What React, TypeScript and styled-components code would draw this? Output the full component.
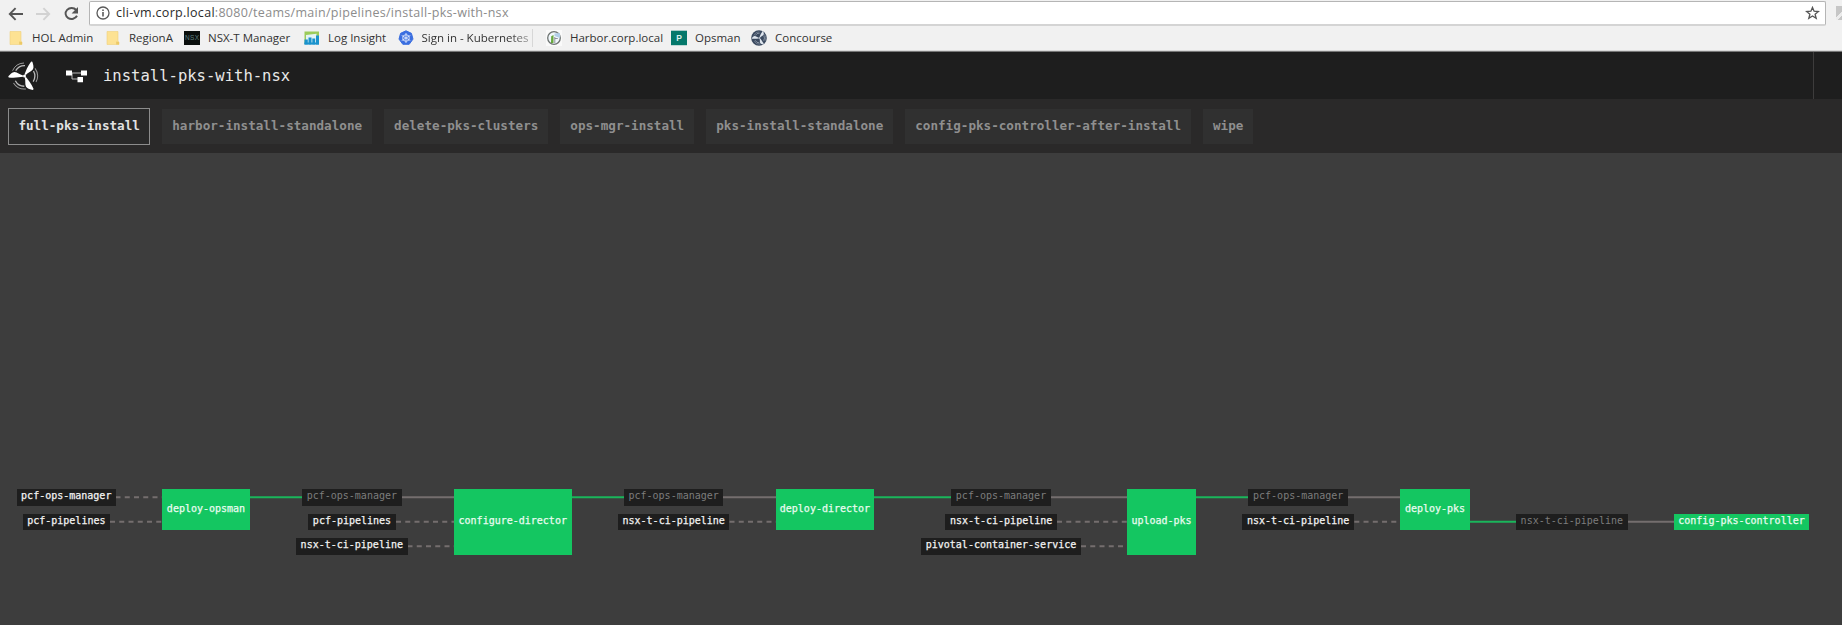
import React from "react";
import styled, { createGlobalStyle, css } from "styled-components";

const GlobalStyle = createGlobalStyle`
  html, body, #root { height: 100%; margin: 0; }
  body { overflow: hidden; background: #3d3d3d; }
  * { box-sizing: border-box; }
`;

const uiFont = `"Open Sans", "Noto Sans", sans-serif`;
const monoFont = `"DejaVu Sans Mono", "Liberation Mono", monospace`;

const Page = styled.div`
  display: flex;
  flex-direction: column;
  height: 625px;
  width: 1842px;
  overflow: hidden;
`;

/* ---------- browser chrome ---------- */

const Chrome = styled.div`
  height: 52px;
  flex: none;
  background: #f1f1f1;
  border-bottom: 1px solid #777;
  box-shadow: inset 0 -1px 0 #d8d8d8;
  font-family: ${uiFont};
`;

const Toolbar = styled.div`
  display: flex;
  height: 26px;
  padding: 1px 0 0 7px;
`;

const NavButtons = styled.div`
  display: flex;
  align-items: center;
  flex: none;
  width: 82px;
  height: 25px;

  svg + svg { margin-left: 11px; }
`;

const AddressBar = styled.div`
  display: flex;
  align-items: center;
  flex: none;
  width: 1737px;
  height: 25px;
  padding: 0 5px 0 6px;
  background: #fff;
  border: 1px solid #b5b5b5;
  border-bottom: 2px solid #d4d4d4;
  border-radius: 2px;
`;

const Url = styled.div`
  flex: 1;
  margin-left: 6px;
  font-size: 12.5px;
  line-height: 20px;
  letter-spacing: 0.3px;
  white-space: nowrap;
  color: #8c8c8c;
`;

const Host = styled.span`
  color: #2b2b2b;
`;

const Extension = styled.div`
  width: 12px;
  height: 14px;
  margin: 5px 0 0 10px;
  flex: none;
  background: linear-gradient(135deg, #c6c6c6 45%, #ececec 45%, #ececec 60%, #c6c6c6 60%);
`;

const Bookmarks = styled.div`
  display: flex;
  align-items: center;
  height: 24px;
  padding-left: 8px;
`;

const Bookmark = styled.div<{ $width: number }>`
  display: flex;
  align-items: center;
  flex: none;
  gap: 8px;
  width: ${(p) => p.$width}px;
  svg { flex: none; }
`;

const BookmarkLabel = styled.span<{ $fade?: boolean }>`
  font-size: 11.5px;
  line-height: 18px;
  color: #333;
  white-space: nowrap;
  ${(p) =>
    p.$fade &&
    css`
      padding-right: 4px;
      border-right: 1px solid #999;
      mask-image: linear-gradient(to right, #000 88px, rgba(0, 0, 0, 0.25) 112px);
    `}
`;

/* ---------- application header ---------- */

const Header = styled.div`
  display: flex;
  align-items: center;
  flex: none;
  height: 47px;
  padding-left: 8px;
  background: #1e1e1e;
`;

const PipelineIcon = styled.svg`
  margin-left: 27px;
`;

const Title = styled.div`
  flex: 1;
  margin-left: 16px;
  font: 15.55px/20px ${monoFont};
  color: #e8e8e8;
`;

const UserPanel = styled.div`
  width: 29px;
  height: 47px;
  border-left: 1px solid #3d3c3c;
`;

const Tabs = styled.div`
  display: flex;
  align-items: center;
  flex: none;
  gap: 12px;
  height: 54px;
  padding-left: 8px;
  background: #2a2929;
`;

const Tab = styled.div<{ $active?: boolean }>`
  height: ${(p) => (p.$active ? 37 : 35)}px;
  padding: 0 ${(p) => (p.$active ? 9.4 : 10)}px;
  border: ${(p) => (p.$active ? "1px solid #8c8c8c" : "0")};
  background: ${(p) => (p.$active ? "#292929" : "#303030")};
  color: ${(p) => (p.$active ? "#e2e2e2" : "#8f8f8f")};
  font: bold 12.6px/34px ${monoFont};
  letter-spacing: 0.01px;
  white-space: nowrap;
`;

/* ---------- pipeline graph ---------- */

const Graph = styled.div`
  position: relative;
  flex: 1;
  background: #3d3d3d;
`;

const Edges = styled.svg`
  position: absolute;
  inset: 0;
`;

type Kind = "input" | "passed" | "job";

const Node = styled.div<{ $x: number; $y: number; $w: number; $h: number; $lift: number; $kind: Kind }>`
  position: absolute;
  left: ${(p) => p.$x}px;
  top: ${(p) => p.$y}px;
  width: ${(p) => p.$w}px;
  height: ${(p) => p.$h}px;
  display: flex;
  align-items: center;
  justify-content: center;
  padding-bottom: ${(p) => p.$lift}px;
  background: ${(p) => (p.$kind === "job" ? "#14c661" : "#1e1e1e")};
  color: ${(p) => (p.$kind === "passed" ? "#7c7c7c" : p.$kind === "job" ? "#e9fbf0" : "#f2f2f2")};
  font: 10px/14px ${monoFont};
  -webkit-text-stroke: ${(p) => (p.$kind === "passed" ? "0" : "0.25px")};
  white-space: nowrap;
`;

const rows = [336, 360.5, 385];
const heights = [16.5, 41, 66];

const nodes: { label: string; x: number; w: number; row: number; span?: number; kind: Kind }[] = [
  { label: "pcf-ops-manager", x: 17, w: 98.5, row: 0, kind: "input" },
  { label: "pcf-pipelines", x: 23, w: 86.7, row: 1, kind: "input" },
  { label: "deploy-opsman", x: 162, w: 88, row: 0, span: 2, kind: "job" },
  { label: "pcf-ops-manager", x: 302, w: 99.7, row: 0, kind: "passed" },
  { label: "pcf-pipelines", x: 308, w: 88, row: 1, kind: "input" },
  { label: "nsx-t-ci-pipeline", x: 296, w: 111.6, row: 2, kind: "input" },
  { label: "configure-director", x: 454, w: 117.5, row: 0, span: 3, kind: "job" },
  { label: "pcf-ops-manager", x: 623.8, w: 99.7, row: 0, kind: "passed" },
  { label: "nsx-t-ci-pipeline", x: 618, w: 111.4, row: 1, kind: "input" },
  { label: "deploy-director", x: 775.5, w: 98.9, row: 0, span: 2, kind: "job" },
  { label: "pcf-ops-manager", x: 951, w: 100, row: 0, kind: "passed" },
  { label: "nsx-t-ci-pipeline", x: 945.4, w: 111.4, row: 1, kind: "input" },
  { label: "pivotal-container-service", x: 921, w: 160, row: 2, kind: "input" },
  { label: "upload-pks", x: 1127, w: 69, row: 0, span: 3, kind: "job" },
  { label: "pcf-ops-manager", x: 1248.4, w: 99.6, row: 0, kind: "passed" },
  { label: "nsx-t-ci-pipeline", x: 1242.4, w: 111.4, row: 1, kind: "input" },
  { label: "deploy-pks", x: 1400.3, w: 69.5, row: 0, span: 2, kind: "job" },
  { label: "nsx-t-ci-pipeline", x: 1516, w: 111.6, row: 1, kind: "passed" },
  { label: "config-pks-controller", x: 1674, w: 135, row: 1, kind: "job" },
];

const edges: { from: number; to: number; row: number; kind: "green" | "solid" | "dashed" }[] = [
  { from: 115.5, to: 162, row: 0, kind: "dashed" },
  { from: 110, to: 162, row: 1, kind: "dashed" },
  { from: 250, to: 302, row: 0, kind: "green" },
  { from: 401, to: 454, row: 0, kind: "solid" },
  { from: 396, to: 454, row: 1, kind: "dashed" },
  { from: 407.5, to: 454, row: 2, kind: "dashed" },
  { from: 571, to: 624, row: 0, kind: "green" },
  { from: 723, to: 776, row: 0, kind: "solid" },
  { from: 729.5, to: 776, row: 1, kind: "dashed" },
  { from: 874, to: 951, row: 0, kind: "green" },
  { from: 1051, to: 1127, row: 0, kind: "solid" },
  { from: 1057, to: 1127, row: 1, kind: "dashed" },
  { from: 1081, to: 1127, row: 2, kind: "dashed" },
  { from: 1196, to: 1249, row: 0, kind: "green" },
  { from: 1348, to: 1401, row: 0, kind: "solid" },
  { from: 1354.3, to: 1401, row: 1, kind: "dashed" },
  { from: 1469, to: 1516, row: 1, kind: "green" },
  { from: 1627, to: 1674, row: 1, kind: "solid" },
];

/* ---------- icons ---------- */

const BackIcon = () => (
  <svg width="17" height="16" viewBox="0 0 17 16" fill="none" stroke="#555" strokeWidth="1.9">
    <path d="M16 8H3M8.6 2.2 2.8 8l5.8 5.8" />
  </svg>
);

const ForwardIcon = () => (
  <svg width="17" height="16" viewBox="0 0 17 16" fill="none" stroke="#d2d2d2" strokeWidth="1.9">
    <path d="M1 8h13M8.4 2.2 14.2 8l-5.8 5.8" />
  </svg>
);

const ReloadIcon = () => (
  <svg width="17" height="16" viewBox="0 0 17 16">
    <path d="M13.2 4A6 5.5 0 1 0 14 9.8" fill="none" stroke="#555" strokeWidth="1.9" />
    <path d="M15 1v6.4H8.6z" fill="#555" />
  </svg>
);

const InfoIcon = () => (
  <svg width="14" height="14" viewBox="0 0 14 14">
    <circle cx="7" cy="7" r="6" fill="none" stroke="#5a5a5a" strokeWidth="1.3" />
    <path d="M6.2 6h1.6v4.6H6.2zM6.2 3.4h1.6v1.5H6.2z" fill="#5a5a5a" />
  </svg>
);

const StarIcon = () => (
  <svg width="15" height="14" viewBox="0 0 15 14">
    <path d="M7.5 1.4 9.1 5.2l4.3.3-3.3 2.7 1.1 4.1-3.7-2.3-3.7 2.3 1.1-4.1L1.6 5.5l4.3-.3z" fill="none" stroke="#555" strokeWidth="1.3" />
  </svg>
);

const FolderIcon = () => (
  <svg width="16" height="16" viewBox="0 0 16 16">
    <path d="M2 1.5h11v10l1 .5v2.500H2z" fill="#fde293" stroke="#f0d27c" strokeWidth=".6" />
    <path d="M11.200 14.500v-3l2.800.4v2.600z" fill="#ecc967" />
  </svg>
);

const NsxIcon = () => (
  <svg width="16" height="16" viewBox="0 0 16 16">
    <rect y="1" width="16" height="14" fill="#0a0f0d" />
    <text x="8" y="10.300" fontFamily="Liberation Sans, sans-serif" fontSize="6.500" textAnchor="middle" fill="#5e8080" textLength="14">
      NSX
    </text>
  </svg>
);

const LogInsightIcon = () => (
  <svg width="16" height="16" viewBox="0 0 16 16">
    <path d="M.5 1.500h14.500V14H.5z" fill="#9ccb5a" />
    <path d="M2 5 12.500 3.800V14H2z" fill="#e4f3f5" />
    <path d="M.5 9.500h3.300v5H.5zM4.500 7.500h3v7h-3zM8.300 8.500h2.900v6H8.300zM12 5.500h3v9h-3z" fill="#1a93cd" />
    <path d="M.5 12.500h14.500v2H.5z" fill="#1a93cd" />
  </svg>
);

const KubernetesIcon = () => (
  <svg width="16" height="16" viewBox="0 0 16 16">
    <path d="M8 .8 13.400 3.300l1.600 5.800-3.800 5.200H4.800L1 9.100l1.600-5.800z" fill="#3a6ee0" stroke="#3a6ee0" strokeLinejoin="round" />
    <g stroke="#dce7fc" fill="none" strokeWidth=".9">
      <circle cx="8" cy="8" r="3.300" />
      <path d="M8 3v10M3.700 5.500l8.600 5M3.700 10.500l8.600-5" />
    </g>
  </svg>
);

const HarborIcon = () => (
  <svg width="16" height="16" viewBox="0 0 16 16">
    <rect width="16" height="16" fill="#fafafa" />
    <circle cx="8" cy="8" r="6.300" fill="#f1f7fb" stroke="#6e7472" strokeWidth="1.300" />
    <path d="M8.500 3.500 14 3v5L8.500 6z" fill="#b3cfe8" />
    <path d="M5.200 6.300 7.500 5v8H5z" fill="#68a83e" />
    <path d="M8.800 7v6M8.800 8.500h3" stroke="#778" strokeWidth=".8" />
  </svg>
);

const OpsmanIcon = () => (
  <svg width="16" height="16" viewBox="0 0 16 16">
    <rect y=".7" width="16" height="14.500" fill="#04786b" />
    <text x="8" y="11" fontFamily="Liberation Sans, sans-serif" fontWeight="bold" fontSize="8.500" textAnchor="middle" fill="#d9efeb">
      P
    </text>
  </svg>
);

const Blades = () => (
  <>
    {[0, 120, 240].map((angle) => (
      <g key={angle} transform={`rotate(${angle})`}>
        <path d="M-1.500 .8C-5 1.200-10 2.200-15.800 1.400L-16.200.3C-14.500-1.400-12.500-4-10-4-7-3.900-5-1.300-1.500-.6z" fill="currentColor" />
        <path d="M-11.900-5.300A13 13 0 0 1-.5-13" fill="none" stroke="currentColor" strokeWidth="1" opacity=".55" />
        <path d="M-8.800-5.300A10.300 10.300 0 0 1 .5-10.300" fill="none" stroke="currentColor" strokeWidth="1.300" opacity=".7" />
      </g>
    ))}
    <circle r="1.500" fill="currentColor" />
  </>
);

const ConcourseIcon = () => (
  <svg width="16" height="16" viewBox="0 0 16 16">
    <circle cx="8" cy="8" r="7.800" fill="#3b4a60" />
    <g transform="translate(8.500 8) scale(.48)" color="#dfe6ee">
      <Blades />
    </g>
  </svg>
);

const bookmarks = [
  { label: "HOL Admin", width: 97, icon: <FolderIcon /> },
  { label: "RegionA", width: 79, icon: <FolderIcon /> },
  { label: "NSX-T Manager", width: 120, icon: <NsxIcon /> },
  { label: "Log Insight", width: 93.5, icon: <LogInsightIcon /> },
  { label: "Sign in - Kubernetes", width: 148.500, icon: <KubernetesIcon />, fade: true },
  { label: "Harbor.corp.local", width: 125, icon: <HarborIcon /> },
  { label: "Opsman", width: 80, icon: <OpsmanIcon /> },
  { label: "Concourse", width: 90, icon: <ConcourseIcon /> },
];

const tabs = [
  "full-pks-install",
  "harbor-install-standalone",
  "delete-pks-clusters",
  "ops-mgr-install",
  "pks-install-standalone",
  "config-pks-controller-after-install",
  "wipe",
];

export default function App() {
  return (
    <Page>
      <GlobalStyle />
      <Chrome>
        <Toolbar>
          <NavButtons>
            <BackIcon />
            <ForwardIcon />
            <ReloadIcon />
          </NavButtons>
          <AddressBar>
            <InfoIcon />
            <Url>
              <Host>cli-vm.corp.local</Host>:8080/teams/main/pipelines/install-pks-with-nsx
            </Url>
            <StarIcon />
          </AddressBar>
          <Extension />
        </Toolbar>
        <Bookmarks>
          {bookmarks.map((b) => (
            <Bookmark key={b.label} $width={b.width}>
              {b.icon}
              <BookmarkLabel $fade={b.fade}>{b.label}</BookmarkLabel>
            </Bookmark>
          ))}
        </Bookmarks>
      </Chrome>

      <Header>
        <svg width="31" height="30" viewBox="-16.500 -15 31 30" color="#fff">
          <Blades />
        </svg>
        <PipelineIcon width="21" height="14" viewBox="0 0 21 14">
          <path d="M4 4h14M6 4v6h6" stroke="#b9b9b9" strokeWidth="1" fill="none" />
          <path d="M0 1.500h6v5H0zM15 1.500h6v5h-6zM11.500 8H17v5.200h-5.500z" fill="#fff" />
        </PipelineIcon>
        <Title>install-pks-with-nsx</Title>
        <UserPanel />
      </Header>

      <Tabs>
        {tabs.map((t, i) => (
          <Tab key={t} $active={i === 0}>
            {t}
          </Tab>
        ))}
      </Tabs>

      <Graph>
        <Edges width="1842" height="472">
          {edges.map((e, i) => (
            <line
              key={i}
              x1={e.from}
              x2={e.to}
              y1={rows[e.row] + 8.2}
              y2={rows[e.row] + 8.2}
              stroke={e.kind === "green" ? "#1ab65b" : "#746e6e"}
              strokeWidth={2}
              strokeDasharray={e.kind === "dashed" ? "5 4.250" : undefined}
            />
          ))}
        </Edges>
        {nodes.map((n, i) => (
          <Node
            key={i}
            $x={n.x}
            $y={rows[n.row]}
            $w={n.w}
            $h={heights[(n.span ?? 1) - 1]}
            $lift={n.row === 1 || n.span === 2 ? 1.2 : 2.6}
            $kind={n.kind}
          >
            {n.label}
          </Node>
        ))}
      </Graph>
    </Page>
  );
}
